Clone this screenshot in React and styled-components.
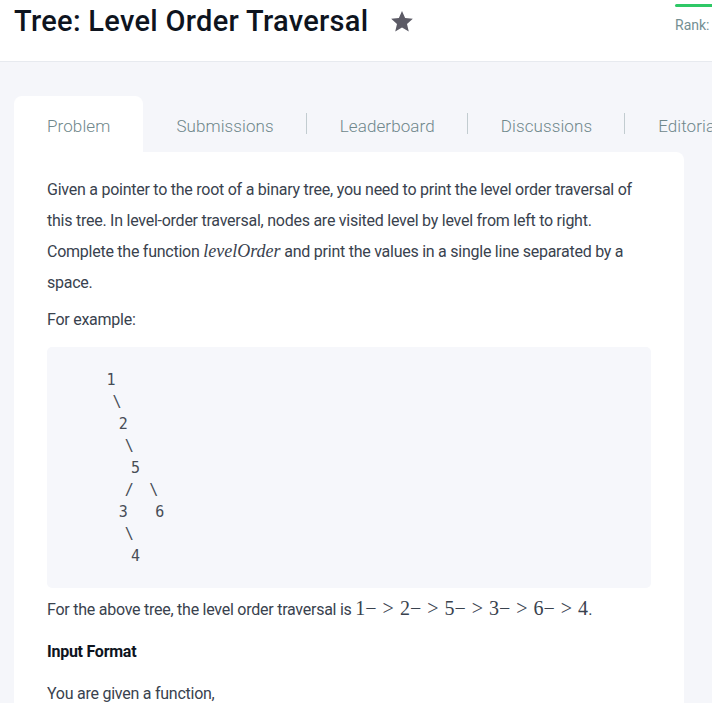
import styled, { createGlobalStyle } from "styled-components";

const GlobalStyle = createGlobalStyle`
    body{
        margin: 0;
        background: #f5f6fa;
        font-family: Roboto, "Liberation Sans", sans-serif;
        overflow: hidden;
    }
`

const Header = styled.header`
    display: flex;
    justify-content: space-between;
    align-items: flex-start;
    height: 61px;
    background: #fff;
    border-bottom: 1px solid #e7eaef;
    padding-left: 14px;
    overflow: hidden;
`

const TitleRow = styled.div`
    display: flex;
    align-items: center;
    gap: 21px;
    height: 42px;

    h1{
        margin: 0;
        font-size: 29px;
        font-weight: 500;
        letter-spacing: 0.3px;
        color: #0e141e;
    }
`

const RankBox = styled.div`
    width: 37px;
    padding-top: 4px;

    .bar{
        height: 3px;
        width: 40px;
        border-radius: 2px;
        background: #2ec866;
    }

    span{
        display: block;
        margin-top: 10px;
        font-size: 14px;
        color: #738f93;
    }
`

const Main = styled.main`
    padding: 34px 28px 0 14px;
`

const Tabs = styled.nav`
    display: flex;
    height: 56px;
    white-space: nowrap;
`

const Tab = styled.div`
    display: flex;
    align-items: center;
    padding: 4px 33px 0 33px;
    font-size: 17px;
    font-weight: 300;
    letter-spacing: 0.1px;
    color: #6f878b;
    background: ${p => p.active ? "#fff" : "transparent"};
    border-radius: ${p => p.active ? "8px 8px 0 0" : "0"};
    position: relative;

    &::after{
        content: "";
        display: ${p => p.sep ? "block" : "none"};
        position: absolute;
        right: 0;
        top: 17px;
        height: 21px;
        width: 1px;
        background: #c2ccd0;
    }
`

const Card = styled.section`
    background: #fff;
    border-radius: 0 8px 0 0;
    padding: 22px 33px 0 33px;
    height: 600px;
    color: #39424e;
    font-size: 16px;
    letter-spacing: -0.25px;
`

const Para = styled.p`
    margin: 0 0 ${p => p.gap ?? 6}px;
    line-height: 31px;
`

const Math = styled.span`
    font-family: "Liberation Serif", "DejaVu Serif", serif;
    font-size: ${p => p.italic ? 18 : 20}px;
    letter-spacing: 0;
    word-spacing: ${p => p.italic ? 0 : 1}px;
    font-style: ${p => p.italic ? "italic" : "normal"};
`

const CodeBlock = styled.pre`
    margin: 0 0 5px;
    background: #f6f7fb;
    border-radius: 5px;
    padding: 22px 23px 21px 29px;
    font-family: "DejaVu Sans Mono", monospace;
    font-size: 15px;
    letter-spacing: -2.93px;
    line-height: 22px;
    color: #474d56;
`

const Heading = styled.h3`
    margin: 0 0 11px;
    font-size: 16px;
    font-weight: 700;
    line-height: 31px;
    color: #0e141e;
`

function Star() {
    return (
        <svg width="26" height="25" viewBox="0 0 24 24">
            <path d="M12 1.8l3 6.9 7.4.7-5.6 4.9 1.7 7.3L12 17.8l-6.5 3.8 1.7-7.3L1.6 9.4 9 8.7z" fill="#5c5b66" />
        </svg>
    );
}

const tree = `     1
      \\
       2
        \\
         5
        /   \\
       3     6
        \\
         4`;

export default function App() {
    const tabs = ["Problem", "Submissions", "Leaderboard", "Discussions", "Editorial"];

    return (
        <>
            <GlobalStyle />
            <Header>
                <TitleRow>
                    <h1>Tree: Level Order Traversal</h1>
                    <Star />
                </TitleRow>
                <RankBox>
                    <div className="bar" />
                    <span>Rank:</span>
                </RankBox>
            </Header>
            <Main>
                <Tabs>
                    {tabs.map((t, i) =>
                        <Tab key={t} active={i === 0} sep={i > 0 && i < tabs.length - 1}>{t}</Tab>
                    )}
                </Tabs>
                <Card>
                    <Para>
                        Given a pointer to the root of a binary tree, you need to print the level order traversal of this tree. In level-order traversal, nodes are visited level by level from left to right. Complete the function <Math italic>levelOrder</Math> and print the values in a single line separated by a space.
                    </Para>
                    <Para gap={12}>For example:</Para>
                    <CodeBlock>{tree}</CodeBlock>
                    <Para gap={11}>
                        For the above tree, the level order traversal is <Math>1− &gt; 2− &gt; 5− &gt; 3− &gt; 6− &gt; 4</Math>.
                    </Para>
                    <Heading>Input Format</Heading>
                    <Para>You are given a function,</Para>
                </Card>
            </Main>
        </>
    );
}
